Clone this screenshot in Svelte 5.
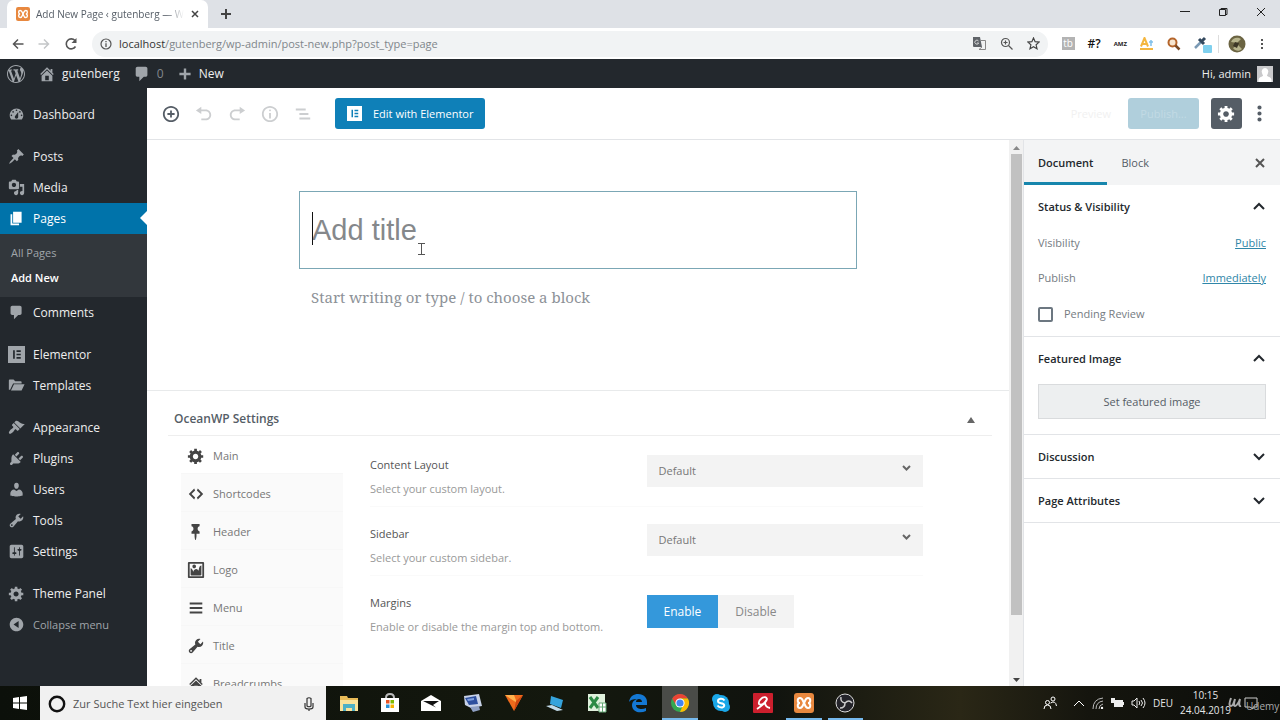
<script>
  // 20x20 glyphs, filled with the current text colour
  const icons = {
    wordpress: 'M20 10c0-5.51-4.49-10-10-10C4.48 0 0 4.49 0 10c0 5.52 4.48 10 10 10 5.51 0 10-4.48 10-10zM7.78 15.37L4.37 6.22c.55-.02 1.17-.08 1.17-.08.5-.06.44-1.13-.06-1.11 0 0-1.45.11-2.37.11-.18 0-.37 0-.58-.01C4.12 2.69 6.87 1.11 10 1.11c2.33 0 4.45.87 6.05 2.34-.68-.11-1.65.39-1.65 1.58 0 .74.45 1.36.9 2.1.35.61.55 1.36.55 2.46 0 1.49-1.4 5-1.4 5l-3.03-8.37c.54-.02.82-.17.82-.17.5-.05.44-1.25-.06-1.22 0 0-1.44.12-2.38.12-.87 0-2.33-.12-2.33-.12-.5-.03-.56 1.2-.06 1.22l.92.08 1.26 3.41zM17.41 10c.24-.64.74-1.87.43-4.25.7 1.29 1.05 2.71 1.05 4.25 0 3.29-1.73 6.24-4.4 7.78.97-2.59 1.94-5.2 2.92-7.78zM6.1 18.09C3.12 16.65 1.11 13.53 1.11 10c0-1.3.23-2.48.72-3.59C3.25 10.3 4.67 14.2 6.1 18.09zm4.03-6.63l2.58 6.98c-.86.29-1.76.45-2.71.45-.79 0-1.57-.11-2.29-.33.81-2.38 1.62-4.74 2.42-7.1z',
    home: 'M16 8.5l1.53 1.53-1.06 1.06L10 4.6l-6.47 6.49-1.06-1.06L10 2.5l4 4v-2h2v4zm-6-2.46l6 5.99V18H4v-5.97zM12 17v-5H8v5h4z',
    plus: 'M17 8.5v3h-5.5V17h-3v-5.5H3v-3h5.500V3h3v5.500z',
    dashboard: 'M3.76 16h12.480c1.1-1.37 1.76-3.110 1.76-5 0-4.42-3.58-8-8-8s-8 3.58-8 8c0 1.89.66 3.63 1.76 5zM10 4c.55 0 1 .45 1 1s-.45 1-1 1-1-.45-1-1 .45-1 1-1zM6 6c.55 0 1 .45 1 1s-.45 1-1 1-1-.45-1-1 .45-1 1-1zm8 0c.55 0 1 .45 1 1s-.45 1-1 1-1-.45-1-1 .45-1 1-1zm-5.370 5.550L12 7v6c0 1.100-.9 2-2 2s-2-.9-2-2c0-.57.24-1.080.63-1.450zM4 10c.55 0 1 .45 1 1s-.45 1-1 1-1-.45-1-1 .45-1 1-1zm12 0c.55 0 1 .45 1 1s-.45 1-1 1-1-.45-1-1 .45-1 1-1z',
    post: 'M10.440 3.020l1.820-1.820 6.360 6.350-1.830 1.820c-1.050-.68-2.480-.57-3.410.36l-.75.75c-.92.93-1.040 2.350-.35 3.410l-1.830 1.820-2.410-2.410-2.800 2.790c-.42.42-3.380 2.710-3.800 2.290s1.860-3.390 2.280-3.810l2.790-2.790L4.100 9.360l1.830-1.820c1.050.69 2.480.57 3.400-.36l.75-.75c.93-.92 1.050-2.350.36-3.410z',
    media: 'M13 11V4c0-.55-.45-1-1-1h-1.670L9 1H5L3.670 3H2c-.55 0-1 .45-1 1v7c0 .55.45 1 1 1h10c.55 0 1-.45 1-1zM7 4.500c1.380 0 2.500 1.120 2.500 2.500S8.380 9.500 7 9.500 4.500 8.380 4.500 7 5.620 4.500 7 4.500zM14 6h5v10.500c0 1.380-1.120 2.500-2.500 2.500S14 17.880 14 16.500s1.120-2.500 2.500-2.500c.17 0 .34.02.5.05V9h-3V6zm-4 8.050V13h2v3.500c0 1.380-1.120 2.500-2.500 2.500S7 17.880 7 16.500 8.120 14 9.500 14c.17 0 .34.02.5.05z',
    page: 'M6 15V2h10v13H6zm-1 1h8v2H3V5h2v11z',
    comments: 'M5 2h9c1.100 0 2 .9 2 2v7c0 1.100-.9 2-2 2h-2l-5 5v-5H5c-1.100 0-2-.9-2-2V4c0-1.100.9-2 2-2z',
    elementor: 'M0 0h20v20H0zM6 5v10h2V5zm4 0v2h5V5zm0 4v2h5V9zm0 4v2h5v-2z',
    templates: 'M1 15V4c0-.6.400-1 1-1h4.500l2 2H15c.6 0 1 .4 1 1v1.500H6L2.500 15zm2.500 1L7 8.500h12.500L16 16z',
    appearance: 'M14.480 11.060L7.410 3.990l1.500-1.500c.5-.56 2.300-.47 3.510.32 1.210.8 1.430 1.280 2.910 2.100 1.180.64 2.450 1.260 4.450.85zm-.71.71L6.700 4.700 4.930 6.470c-.39.39-.39 1.020 0 1.410l1.060 1.060c.39.39.39 1.030 0 1.420-.6.6-1.430 1.110-2.210 1.690-.35.26-.7.53-1.010.84C1.430 14.230.4 16.080 1.400 17.070c.99 1 2.840-.03 4.180-1.360.31-.31.58-.66.85-1.020.57-.78 1.080-1.610 1.690-2.210.39-.39 1.020-.39 1.410 0l1.060 1.060c.39.39 1.020.39 1.410 0z',
    plugins: 'M13.110 4.360L9.870 7.600 8 5.730l3.240-3.240c.35-.34 1.050-.2 1.560.32.52.51.66 1.210.31 1.550zm-8 1.770l.91-1.120 9.010 9.010-1.190.84c-.71.71-2.630 1.160-3.820 1.160H6.140L4.900 17.260c-.59.59-1.540.59-2.120 0-.59-.58-.59-1.530 0-2.120l1.240-1.240v-3.880c0-1.130.4-3.190 1.090-3.890zm7.260 3.970l3.240-3.240c.34-.35 1.040-.21 1.550.31.52.51.66 1.210.31 1.550l-3.240 3.250z',
    users: 'M10 9.250c-2.270 0-2.730-3.440-2.730-3.440C7 4.020 7.820 2 9.970 2c2.160 0 2.980 2.020 2.710 3.810 0 0-.41 3.440-2.680 3.440zm0 2.570L12.720 10c2.390 0 4.520 2.330 4.520 4.530v2.490s-3.650 1.130-7.240 1.130c-3.650 0-7.240-1.130-7.240-1.130v-2.490c0-2.250 1.940-4.480 4.470-4.480z',
    tools: 'M16.680 9.770c-1.340 1.340-3.300 1.670-4.950.99l-5.410 6.520c-.99.99-2.590.99-3.580 0s-.99-2.590 0-3.570l6.520-5.420c-.68-1.650-.35-3.610.99-4.950 1.280-1.280 3.120-1.620 4.720-1.060l-2.890 2.890 2.820 2.820 2.860-2.870c.53 1.580.18 3.390-1.080 4.650zM3.810 16.210c.4.39 1.040.39 1.430 0 .4-.4.4-1.040 0-1.430-.39-.4-1.030-.4-1.430 0-.39.39-.39 1.030 0 1.430z',
    settings: 'M18 16V4c0-1.100-.9-2-2-2H4c-1.100 0-2 .9-2 2v12c0 1.100.9 2 2 2h12c1.100 0 2-.9 2-2zM8 11h1c.55 0 1 .45 1 1s-.45 1-1 1H8v1.500c0 .28-.22.5-.5.5s-.5-.22-.5-.5V13H6c-.55 0-1-.45-1-1s.45-1 1-1h1V5.500c0-.28.22-.5.5-.5s.5.22.5.5V11zm5-2h-1c-.55 0-1-.45-1-1s.45-1 1-1h1V5.500c0-.28.22-.5.5-.5s.5.22.5.5V7h1c.55 0 1 .45 1 1s-.45 1-1 1h-1v5.500c0 .28-.22.5-.5.5s-.5-.22-.5-.5V9z',
    gear: 'M18 12h-2.180c-.17.7-.44 1.350-.81 1.930l1.540 1.540-2.100 2.100-1.540-1.540c-.58.36-1.230.63-1.910.79V19H8v-2.180c-.68-.16-1.330-.43-1.910-.79l-1.540 1.540-2.120-2.120 1.540-1.540c-.36-.58-.63-1.230-.79-1.910H1V9.030h2.170c.16-.7.44-1.350.8-1.940L2.430 5.550l2.100-2.100 1.540 1.540c.58-.37 1.240-.64 1.930-.81V2h3v2.180c.68.16 1.330.43 1.910.79l1.540-1.540 2.120 2.120-1.540 1.540c.36.59.64 1.240.8 1.940H18V12zm-8.500 1.500c1.660 0 3-1.340 3-3s-1.340-3-3-3-3 1.340-3 3 1.340 3 3 3z',
    collapse: 'M10 2c4.420 0 8 3.580 8 8s-3.580 8-8 8-8-3.580-8-8 3.580-8 8-8zm2.500 12V6l-6 4z',
    insert: 'M10 1c-5 0-9 4-9 9s4 9 9 9 9-4 9-9-4-9-9-9zm0 16c-3.900 0-7-3.100-7-7s3.100-7 7-7 7 3.100 7 7-3.100 7-7 7zm1-11H9v3H6v2h3v3h2v-3h3V9h-3V6z',
    undo: 'M12 5H7V2L1 6l6 4V7h5c2.200 0 4 1.800 4 4s-1.800 4-4 4H7v2h5c3.300 0 6-2.700 6-6s-2.700-6-6-6z',
    redo: 'M8 5h5V2l6 4-6 4V7H8c-2.200 0-4 1.800-4 4s1.800 4 4 4h5v2H8c-3.300 0-6-2.700-6-6s2.700-6 6-6z',
    info: 'M9 15h2V9H9v6zm1-10c-.5 0-1 .5-1 1s.5 1 1 1 1-.5 1-1-.5-1-1-1zm0-4c-5 0-9 4-9 9s4 9 9 9 9-4 9-9-4-9-9-9zm0 16c-3.900 0-7-3.100-7-7s3.100-7 7-7 7 3.100 7 7-3.100 7-7 7z',
    outline: 'M2 4h11v2H2zm4 5h10v2H6zm0 5h12v2H6z',
    code: 'M9 6l-4 4 4 4-1 2-6-6 6-6zm2 8l4-4-4-4 1-2 6 6-6 6z',
    pin: 'M5 3.610V1.040l8.990-.01-.01 2.580c-1.220.26-2.160 1.350-2.160 2.670v.5c.01 1.310.93 2.400 2.170 2.660l-.01 2.580h-3.410l-.01 2.570c0 .6-.47 4.410-1.060 4.410-.6 0-1.080-3.810-1.080-4.410v-2.560L5 12.020l.01-2.580c1.230-.25 2.150-1.350 2.150-2.660v-.5c0-1.310-.92-2.410-2.160-2.670z',
    image: 'M2.250 1h15.500c.69 0 1.250.56 1.250 1.250v15.500c0 .69-.56 1.250-1.250 1.250H2.250C1.560 19 1 18.440 1 17.750V2.250C1 1.560 1.560 1 2.250 1zM17 17V3H3v14h14zM10 6c0-1.100-.9-2-2-2s-2 .9-2 2 .9 2 2 2 2-.9 2-2zm3 5s0-6 3-6v10c0 .55-.45 1-1 1H5c-.55 0-1-.45-1-1V8c2 0 3 4 3 4s1-3 3-3 3 2 3 2z',
    menu: 'M17 6V4H3v2h14zm0 5V9H3v2h14zm0 5v-2H3v2h14z',
    dots: 'M10 1.500a2.200 2.200 0 100 4.400 2.200 2.200 0 000-4.400zm0 6.300a2.200 2.200 0 100 4.400 2.200 2.200 0 000-4.400zm0 6.300a2.200 2.200 0 100 4.400 2.200 2.200 0 000-4.400z',
  };

  const menuGroups = [
    [{ icon: 'dashboard', label: 'Dashboard' }],
    [
      { icon: 'post', label: 'Posts' },
      { icon: 'media', label: 'Media' },
      { icon: 'page', label: 'Pages', current: true, children: ['All Pages', 'Add New'] },
      { icon: 'comments', label: 'Comments' },
    ],
    [
      { icon: 'elementor', label: 'Elementor' },
      { icon: 'templates', label: 'Templates' },
    ],
    [
      { icon: 'appearance', label: 'Appearance' },
      { icon: 'plugins', label: 'Plugins' },
      { icon: 'users', label: 'Users' },
      { icon: 'tools', label: 'Tools' },
      { icon: 'settings', label: 'Settings' },
    ],
    [
      { icon: 'gear', label: 'Theme Panel' },
      { icon: 'collapse', label: 'Collapse menu', muted: true },
    ],
  ];

  const settingTabs = [
    { icon: 'gear', label: 'Main' },
    { icon: 'code', label: 'Shortcodes' },
    { icon: 'pin', label: 'Header' },
    { icon: 'image', label: 'Logo' },
    { icon: 'menu', label: 'Menu' },
    { icon: 'tools', label: 'Title' },
    { icon: 'home', label: 'Breadcrumbs' },
  ];

  const selects = [
    { id: 'layout', label: 'Content Layout', hint: 'Select your custom layout.' },
    { id: 'sidebar', label: 'Sidebar', hint: 'Select your custom sidebar.' },
  ];

  const apps = ['explorer', 'store', 'mail', 'pc', 'fox', 'remote', 'excel', 'edge', 'chrome', 'skype', 'avira', 'xampp', 'obs'];
  const running = ['chrome', 'xampp', 'obs'];

  let activeTab = $state('Main');
  let margins = $state('Enable');
  let title = $state('');
  let pending = $state(false);
</script>

{#snippet icon(name, size = 18)}
  <svg class="icon" width={size} height={size} viewBox="0 0 20 20" aria-hidden="true">
    <path fill="currentColor" fill-rule="evenodd" d={icons[name]} />
  </svg>
{/snippet}

{#snippet chevron(up)}
  <svg width="14" height="14" viewBox="0 0 14 14" aria-hidden="true">
    <path d={up ? 'M2 9l5-5 5 5' : 'M2 4l5 5 5-5'} fill="none" stroke="#23282d" stroke-width="2" />
  </svg>
{/snippet}

{#snippet xampp(size)}
  <svg width={size} height={size} viewBox="0 0 20 20" aria-hidden="true">
    <rect width="20" height="20" rx="3" fill="#e8883f" />
    <path d="M6 5c-3 0-3 5 0 5-3 0-3 5 0 5s3-4 4-5c1 1 1 5 4 5s3-5 0-5c3 0 3-5 0-5s-3 4-4 5c-1-1-1-5-4-5z" fill="none" stroke="#fff" stroke-width="2" />
  </svg>
{/snippet}

<div class="screen">
  <header class="browser">
    <div class="tabstrip">
      <div class="tab">
        {@render xampp(14)}
        <span class="tab-title">Add New Page ‹ gutenberg — W</span>
        <button aria-label="Close tab">
          <svg width="10" height="10" viewBox="0 0 10 10"><path d="M2 2l6 6M8 2l-6 6" stroke="#444" stroke-width="1.500" /></svg>
        </button>
      </div>
      <button class="new-tab" aria-label="New tab">
        <svg width="12" height="12" viewBox="0 0 12 12"><path d="M6 1v10M1 6h10" stroke="#444" stroke-width="2" /></svg>
      </button>
      <div class="window-buttons">
        <button aria-label="Minimize"><svg width="10" height="10" viewBox="0 0 10 10"><path d="M0 4.500h10" stroke="#222" /></svg></button>
        <button aria-label="Restore"><svg width="10" height="10" viewBox="0 0 10 10"><path d="M1.500 2.500h6v6h-6zM3 2.500v-1h6v6H8" fill="none" stroke="#222" /></svg></button>
        <button aria-label="Close window"><svg width="10" height="10" viewBox="0 0 10 10"><path d="M1 1l8 8M9 1L1 9" stroke="#222" /></svg></button>
      </div>
    </div>
    <div class="toolbar">
      <button aria-label="Back"><svg width="12" height="12" viewBox="0 0 12 12"><path d="M11.500 6H2M6 1.500L1.500 6 6 10.500" fill="none" stroke="#555" stroke-width="1.500" /></svg></button>
      <button aria-label="Forward"><svg width="12" height="12" viewBox="0 0 12 12"><path d="M.5 6H10M6 1.500L10.500 6 6 10.500" fill="none" stroke="#c4c6c8" stroke-width="1.500" /></svg></button>
      <button aria-label="Reload"><svg width="14" height="14" viewBox="0 0 14 14"><path d="M11.500 9.500A5 5 0 1111 3.500" fill="none" stroke="#555" stroke-width="1.600" /><path d="M12.500 1v5h-5z" fill="#555" /></svg></button>
      <div class="address">
        <svg width="12" height="12" viewBox="0 0 12 12"><circle cx="6" cy="6" r="5" fill="none" stroke="#555" stroke-width="1.200" /><path d="M6 5.200V9M6 3v1.200" stroke="#555" stroke-width="1.300" /></svg>
        <span class="url"><b>localhost</b>/gutenberg/wp-admin/post-new.php?post_type=page</span>
        <div class="address-icons">
          <svg width="13" height="13" viewBox="0 0 13 13"><path d="M0 0h7l2 10H1a1 1 0 01-1-1z" fill="#5f6368" /><path d="M8 3.500h4.500v9H6l3-2.500" fill="none" stroke="#888" /><path d="M5.500 4a2 2 0 10.200 2H4M9 6h3M10.500 5v1q0 2-1.500 3" fill="none" stroke="#eee" stroke-width=".8" /></svg>
          <svg width="13" height="13" viewBox="0 0 13 13"><circle cx="5.500" cy="5.500" r="4" fill="none" stroke="#555" stroke-width="1.200" /><path d="M8.500 8.500l4 4M3.500 5.500h4M5.500 3.500v4" stroke="#555" stroke-width="1.200" /></svg>
          <svg width="13" height="13" viewBox="0 0 13 13"><path d="M6.500 1l1.600 3.700 4 .4-3 2.700.9 3.900-3.500-2-3.500 2 .9-3.900-3-2.700 4-.4z" fill="none" stroke="#444" stroke-width="1.200" /></svg>
        </div>
      </div>
      <div class="extensions">
        <span class="tb">tb</span>
        <span class="hash">#?</span>
        <span class="amz">AMZ</span>
        <svg width="14" height="14" viewBox="0 0 14 14"><path d="M1 9.500L4.500 1 8 9.500M2.500 7h4M0 12h13" fill="none" stroke="#f4b63f" stroke-width="2" /><path d="M11 9V3M9 5h4" stroke="#7fc0ea" stroke-width="1.500" /></svg>
        <svg width="14" height="14" viewBox="0 0 14 14"><circle cx="5.500" cy="5.500" r="4" fill="#f7e6d0" stroke="#b5652b" stroke-width="2" /><path d="M8.500 8.500l4 4" stroke="#7a4a25" stroke-width="2.500" /></svg>
        <svg width="18" height="18" viewBox="0 0 18 18"><path d="M1 13l6-6" stroke="#7b9ab5" stroke-width="2.500" /><path d="M5 4l5 5M7 7l4-4" stroke="#34495e" stroke-width="3" /><rect x="9" y="10" width="9" height="8" rx="1" fill="#7fd0ee" /></svg>
      </div>
      <svg class="profile" width="18" height="18" viewBox="0 0 18 18"><circle cx="9" cy="9" r="8.500" fill="#6b6442" /><path d="M3 7c2-5 7-5 10-3l-4 4zM5 13l5-3 4 4c-3 3-7 2-9-1z" fill="#b7b48c" /><path d="M7 7l4 1-2 5-4-2z" fill="#3c3626" /></svg>
      <button aria-label="Browser menu"><svg width="4" height="14" viewBox="0 0 4 14"><path d="M1 2h2v2H1zm0 4h2v2H1zm0 4h2v2H1z" fill="#555" /></svg></button>
    </div>
  </header>

  <nav class="adminbar" aria-label="Toolbar">
    <a href="#wp" aria-label="About WordPress">{@render icon('wordpress')}</a>
    <a href="#site">{@render icon('home')}gutenberg</a>
    <a href="#comments" class="count">{@render icon('comments')}<span>0</span></a>
    <a href="#new" class="new">{@render icon('plus', 16)}New</a>
    <a href="#profile" class="account">
      Hi, admin
      <svg width="16" height="16" viewBox="0 0 16 16"><path fill="#c9c9cb" d="M0 0h16v16H0z" /><path fill="#fff" d="M8 2a3.500 3.500 0 013 5c-.4 1.500-1 2-1 3 2 1 4 1 4.500 4v2h-13v-2c.5-3 2.500-3 4.500-4 0-1-.6-1.500-1-3a3.500 3.500 0 013-5z" /></svg>
    </a>
  </nav>

  <div class="workspace">
    <nav class="adminmenu" aria-label="Main menu">
      {#each menuGroups as group}
        <ul>
          {#each group as item}
            <li>
              <a href="#{item.icon}" class="item" class:current={item.current} class:muted={item.muted}>
                {@render icon(item.icon, 17)}{item.label}
              </a>
              {#if item.children}
                <div class="submenu">
                  {#each item.children as child}
                    <a href="#sub" class:active={child === 'Add New'}>{child}</a>
                  {/each}
                </div>
              {/if}
            </li>
          {/each}
        </ul>
      {/each}
    </nav>

    <div class="editor">
      <div class="editor-header">
        <button class="tool" aria-label="Add block">{@render icon('insert')}</button>
        <button class="tool off" aria-label="Undo">{@render icon('undo')}</button>
        <button class="tool off" aria-label="Redo">{@render icon('redo')}</button>
        <button class="tool off" aria-label="Content structure">{@render icon('info')}</button>
        <button class="tool off" aria-label="Block navigation">{@render icon('outline')}</button>
        <button class="elementor">{@render icon('elementor', 15)}Edit with Elementor</button>
        <div class="editor-actions">
          <button class="preview" disabled>Preview</button>
          <button class="publish" disabled>Publish...</button>
          <button class="gear" aria-label="Settings">{@render icon('gear', 19)}</button>
          <button class="more" aria-label="More tools">{@render icon('dots', 19)}</button>
        </div>
      </div>

      <div class="editor-body">
        <main class="canvas">
          <div class="writing">
            <div class="title-block">
              <span class="caret"></span>
              <input aria-label="Title" placeholder="Add title" bind:value={title} />
              <svg class="pointer" width="7" height="12" viewBox="0 0 7 12"><path d="M0 .5h7M0 11.500h7M3.500 0v12" stroke="#555" /></svg>
            </div>
            <input class="first-block" aria-label="First block" placeholder="Start writing or type / to choose a block" />
          </div>

          <section class="metabox">
            <div class="metabox-head">
              <h2>OceanWP Settings</h2>
              <button aria-label="Toggle panel"><svg width="8" height="6" viewBox="0 0 8 6"><path d="M4 0l4 6H0z" fill="#666" /></svg></button>
            </div>
            <div class="metabox-body">
              <div class="setting-tabs">
                {#each settingTabs as tab}
                  <button class:selected={activeTab === tab.label} onclick={() => (activeTab = tab.label)}>
                    {@render icon(tab.icon)}{tab.label}
                  </button>
                {/each}
              </div>
              <div class="fields">
                {#each selects as field}
                  <div class="field">
                    <div class="about">
                      <label for={field.id}>{field.label}</label>
                      <p>{field.hint}</p>
                    </div>
                    <div class="select">
                      <select id={field.id}><option>Default</option></select>
                      <svg width="9" height="6" viewBox="0 0 9 6"><path d="M1 1l3.500 3.500L8 1" fill="none" stroke="#666" stroke-width="2" /></svg>
                    </div>
                  </div>
                {/each}
                <div class="field">
                  <div class="about">
                    <span id="margins">Margins</span>
                    <p>Enable or disable the margin top and bottom.</p>
                  </div>
                  <div class="switch" role="group" aria-labelledby="margins">
                    {#each ['Enable', 'Disable'] as option}
                      <button class:on={margins === option} onclick={() => (margins = option)}>{option}</button>
                    {/each}
                  </div>
                </div>
              </div>
            </div>
          </section>
        </main>

        <div class="scrollbar" aria-hidden="true">
          <svg width="7" height="4" viewBox="0 0 7 4"><path d="M3.500 0L7 4H0z" fill="#888" /></svg>
          <div class="thumb"></div>
          <svg width="7" height="4" viewBox="0 0 7 4"><path d="M3.500 4L7 0H0z" fill="#444" /></svg>
        </div>

        <aside class="inspector">
          <div class="inspector-tabs">
            <button class="chosen">Document</button>
            <button>Block</button>
            <button class="close" aria-label="Close settings">
              <svg width="10" height="10" viewBox="0 0 10 10"><path d="M1 1l8 8M9 1L1 9" stroke="#555" stroke-width="2" /></svg>
            </button>
          </div>
          <section class="panel status">
            <button class="panel-head">Status &amp; Visibility{@render chevron(true)}</button>
            <div class="row"><span>Visibility</span><a href="#public">Public</a></div>
            <div class="row"><span>Publish</span><a href="#immediately">Immediately</a></div>
            <label class="check"><input type="checkbox" bind:checked={pending} />Pending Review</label>
          </section>
          <section class="panel featured">
            <button class="panel-head">Featured Image{@render chevron(true)}</button>
            <button class="set-image">Set featured image</button>
          </section>
          <section class="panel"><button class="panel-head">Discussion{@render chevron(false)}</button></section>
          <section class="panel"><button class="panel-head">Page Attributes{@render chevron(false)}</button></section>
        </aside>
      </div>
    </div>
  </div>

  <footer class="taskbar">
    <button class="start" aria-label="Start">
      <svg width="14" height="14" viewBox="0 0 14 14"><path d="M0 2l6-1v5.500H0zM7 .9L14 0v6.500H7zM0 7.500h6V13l-6-1zM7 7.500h7V14l-7-1z" fill="#fff" /></svg>
    </button>
    <div class="search">
      <svg width="18" height="18" viewBox="0 0 18 18"><circle cx="9" cy="9" r="7.200" fill="none" stroke="#111" stroke-width="2.400" /></svg>
      <input aria-label="Suche" placeholder="Zur Suche Text hier eingeben" />
      <svg width="10" height="14" viewBox="0 0 10 14"><path d="M3 1.500q2-1.500 4 0V9q-2 1.500-4 0zM1 6v4q0 2 4 2t4-2V6M5 12v2" fill="none" stroke="#333" stroke-width="1.200" /></svg>
    </div>
    <div class="apps">
      {#each apps as app}
        <button class:running={running.includes(app)} class:front={app === 'chrome'} aria-label={app}>
          {#if app === 'xampp'}
            {@render xampp(20)}
          {:else}
            <svg width="20" height="20" viewBox="0 0 20 20">
              {#if app === 'explorer'}
                <path d="M1 3h7l1 2h10v13H1z" fill="#e8bb58" /><path d="M1 7h18v11H1z" fill="#fbe29b" /><path d="M4 18v-7h12v7h-3v-3H7v3z" fill="#4fb0c6" />
              {:else if app === 'store'}
                <path d="M6 5q0-4 4-4t4 4" fill="none" stroke="#bbb" stroke-width="2" /><path d="M1 5h18v14H1z" fill="#fff" /><path d="M6 7h3.500v3.500H6z" fill="#e85325" /><path d="M10.500 7H14v3.500h-3.500z" fill="#7fba00" /><path d="M6 11.500h3.500V15H6z" fill="#2a92d8" /><path d="M10.500 11.500H14V15h-3.500z" fill="#f6b300" />
              {:else if app === 'mail'}
                <path d="M0 8l10-6 10 6v10H0z" fill="#fff" /><path d="M2 8h16l-6 4 3 2.500z" fill="#111" />
              {:else if app === 'pc'}
                <path d="M1 3l15-2 3 12-11 2-6-3z" fill="#c8d2e8" /><path d="M2 5l11-2 2 8-9 1z" fill="#2d4f9e" /><path d="M4 6l7-1v2l-6 1z" fill="#7fa0e0" /><path d="M7 14l9-1 1 4-7 2z" fill="#8e9fc3" />
              {:else if app === 'fox'}
                <path d="M1 2h18l-9 16z" fill="#ee6a1c" /><path d="M1 2h9l3 8z" fill="#ffb14d" /><path d="M19 2l-9 16 2-10z" fill="#cf4510" />
              {:else if app === 'remote'}
                <path d="M5 3l12 4-2 8-11-4z" fill="#35a3dc" /><path d="M0 13l6-1 11 5-6 1z" fill="#c3dbe9" />
              {:else if app === 'excel'}
                <path d="M1 1h17v17H1z" fill="#dff0dc" /><path d="M3 4l8 11M11 4L3 15" stroke="#2c8a45" stroke-width="3" /><path d="M12 10h7v9h-7zM12 14h7M15.500 10v9" fill="#fff" stroke="#65a875" />
              {:else if app === 'edge'}
                <path d="M1 9C2 3 6 1 10 1c6 0 9 4 9 8v3H8c0 4 6 5 10 3v3c-6 3-14 1-14-6 0-3 2-5 5-6-4 0-7 1-8 3zm7 0h6c0-4-6-4-6 0z" fill="#1478d4" />
              {:else if app === 'chrome'}
                <circle cx="10" cy="10" r="9" fill="#34a853" /><path d="M2.200 5.500A9 9 0 0117.800 5.500H10L6 12z" fill="#ea4335" /><path d="M17.800 5.500A9 9 0 0110 19l4-9-4-4.500z" fill="#fbbc05" /><circle cx="10" cy="10" r="4.600" fill="#fff" /><circle cx="10" cy="10" r="3.600" fill="#4285f4" />
              {:else if app === 'skype'}
                <circle cx="10" cy="10" r="8" fill="#1aa7e8" /><circle cx="6" cy="6" r="5" fill="#1aa7e8" /><circle cx="14" cy="14" r="5" fill="#1aa7e8" /><path d="M13.500 7.500Q12 5.500 9.500 5.800 7 6.200 7 8t3 2.200 3.200 2-1.700 2.200Q8 14.800 6.500 12.500" fill="none" stroke="#fff" stroke-width="2" />
              {:else if app === 'avira'}
                <rect width="20" height="20" rx="1" fill="#cc1f2d" /><path d="M4 16Q13 10 14 6q-1-3-5-1-4 3-3 6 3 2 6-2 0 5 5 6" fill="none" stroke="#fff" stroke-width="1.800" />
              {:else if app === 'obs'}
                <circle cx="10" cy="10" r="9" fill="#24242a" stroke="#ddd" /><path d="M10 10q-5-1-4-6M10 10q4-4 7 0M10 10q0 5-5 5" fill="none" stroke="#ccc" stroke-width="1.500" />
              {/if}
            </svg>
          {/if}
        </button>
      {/each}
    </div>
    <div class="tray">
      <svg class="people" width="14" height="14" viewBox="0 0 14 14"><g fill="none" stroke="#fff"><circle cx="4.500" cy="6.500" r="2" /><path d="M1 13q0-4 3.500-4T8 13" /><circle cx="10" cy="3" r="2" /><path d="M7.500 7q5-3 6 3" /></g></svg>
      <svg width="12" height="8" viewBox="0 0 12 8"><path d="M1 7l5-5 5 5" fill="none" stroke="#fff" /></svg>
      <svg width="12" height="12" viewBox="0 0 12 12"><path d="M1 12Q1 2 11 1M4 12q0-7 7-8M7 12q0-4 4-5" fill="none" stroke="#bbb" /><circle cx="10" cy="11" r="1.200" fill="#fff" /></svg>
      <svg width="13" height="10" viewBox="0 0 13 10"><path d="M3 2h9v7H3zM0 0h4v5H0z" fill="#eee" /><path d="M12 4h1v3h-1z" fill="#eee" /></svg>
      <svg width="15" height="12" viewBox="0 0 15 12"><path d="M1 4h2l3-3v10L3 8H1zM8 4q1.500 2 0 4M10 3q3 3 0 6M12 1q4 5 0 10" fill="none" stroke="#eee" /></svg>
      <span>DEU</span>
      <time>10:15<br />24.04.2019</time>
      <div class="notify">
        <svg width="14" height="13" viewBox="0 0 14 13"><path d="M1 1h12v9H9v2l-3-2H1z" fill="none" stroke="#ccc" /></svg>
        <svg class="mark" width="14" height="13" viewBox="0 0 14 13"><path d="M3 1q-3 8 0 8 2 0 4-7-2 7 0 7 3-1 5-7-2 8 1 7" fill="none" stroke="#aaa" stroke-width="2" /></svg>
        <span>Udemy</span>
      </div>
    </div>
  </footer>
</div>

<style>
  :global(body) {
    margin: 0;
    overflow: hidden;
  }

  .screen {
    display: flex;
    flex-direction: column;
    height: 100vh;
    font: 11px/16px "Open Sans", "Noto Sans", sans-serif;
    color: #555d66;
    background: #fff;
  }

  button, input, select {
    font: inherit;
    color: inherit;
    margin: 0;
    padding: 0;
    border: 0;
    background: none;
  }

  button {
    display: flex;
    align-items: center;
    justify-content: center;
  }

  a {
    color: inherit;
    text-decoration: none;
  }

  svg {
    display: block;
    flex: none;
  }

  ul, p, h2 {
    margin: 0;
    padding: 0;
    list-style: none;
  }

  /* browser window */
  .tabstrip {
    display: flex;
    align-items: stretch;
    height: 28px;
    background: #dee1e6;
  }

  .tab {
    display: flex;
    align-items: center;
    gap: 6px;
    width: 184px;
    margin-left: 7px;
    padding: 0 8px 0 9px;
    background: #fff;
    border-radius: 7px 7px 0 0;
    font-size: 10px;
  }

  .tab-title {
    flex: 1;
    overflow: hidden;
    white-space: nowrap;
    mask-image: linear-gradient(90deg, #000 88%, transparent);
  }

  .new-tab {
    width: 36px;
  }

  .window-buttons {
    display: flex;
    margin-left: auto;
  }

  .window-buttons button {
    width: 38px;
    padding-bottom: 4px;
  }

  .toolbar {
    display: flex;
    align-items: center;
    gap: 14px;
    height: 31px;
    padding: 0 16px 0 12px;
  }

  .address {
    display: flex;
    flex: 1;
    align-items: center;
    gap: 7px;
    height: 26px;
    padding: 0 8px;
    border-radius: 13px;
    background: #f1f3f4;
  }

  .url {
    color: #80868b;
  }

  .url b {
    font-weight: 400;
    color: #333;
  }

  .address-icons {
    display: flex;
    gap: 14px;
    margin-left: auto;
  }

  .extensions {
    display: flex;
    align-items: center;
    gap: 13px;
    padding-right: 6px;
    margin-right: -5px;
    border-right: 1px solid #ddd;
  }

  .tb {
    width: 13px;
    background: #b3b3b3;
    color: #fff;
    font-size: 10px;
    line-height: 13px;
    text-align: center;
  }

  .hash {
    color: #111;
    font-size: 12px;
    font-weight: 600;
  }

  .amz {
    color: #222;
    font-size: 6px;
    font-weight: 700;
  }

  /* admin bar */
  .adminbar {
    display: flex;
    align-items: center;
    gap: 13px;
    height: 28px;
    padding: 1px 7px 0;
    background: #23282d;
    color: #eee;
    font-size: 12px;
  }

  .adminbar a {
    display: flex;
    align-items: center;
    gap: 6px;
  }

  .adminbar .icon {
    color: #a0a5aa;
  }

  .adminbar .count {
    color: #82878c;
  }

  .adminbar .account {
    margin-left: auto;
    font-size: 11px;
  }

  .workspace {
    display: flex;
    flex: 1;
    min-height: 0;
  }

  .adminmenu {
    display: flex;
    flex-direction: column;
    flex: none;
    gap: 11px;
    box-sizing: border-box;
    width: 147px;
    padding-top: 11px;
    overflow: hidden;
    background: #23282d;
    color: #eee;
    font-size: 12px;
  }

  .item {
    position: relative;
    display: flex;
    align-items: center;
    gap: 8px;
    height: 31px;
    padding-left: 8px;
  }

  .item .icon {
    color: #a0a5aa;
  }

  .item.current {
    background: #0073aa;
    color: #fff;
  }

  .item.current .icon {
    color: #fff;
  }

  .item.current::after {
    content: '';
    position: absolute;
    top: 8px;
    right: 0;
    border: 7px solid transparent;
    border-left: 0;
    border-right-color: #fff;
  }

  .item.muted {
    color: #a0a5aa;
    font-size: 11px;
  }

  .submenu {
    display: flex;
    flex-direction: column;
    gap: 9px;
    padding: 11px;
    background: #32373c;
    color: #a0a5aa;
    font-size: 11px;
  }

  .submenu .active {
    color: #fff;
    font-weight: 600;
  }

  /* editor */
  .editor {
    display: flex;
    flex: 1;
    flex-direction: column;
    min-width: 0;
  }

  .editor-header {
    display: flex;
    align-items: center;
    gap: 15px;
    height: 51px;
    padding: 0 15px;
    border-bottom: 1px solid #e2e4e7;
  }

  .off {
    color: #ccced0;
  }

  .elementor {
    gap: 11px;
    height: 31px;
    margin-left: 8px;
    padding: 0 12px;
    border-radius: 3px;
    background: #0f80b8;
    color: #fff;
  }

  .editor-actions {
    display: flex;
    align-items: center;
    gap: 12px;
    margin-left: auto;
  }

  .preview {
    color: #f1f1f1;
    padding: 0 5px;
  }

  .publish {
    width: 71px;
    height: 31px;
    border-radius: 3px;
    background: #b0cfdc;
    color: #c2dae4;
  }

  .gear {
    width: 31px;
    height: 31px;
    border-radius: 3px;
    background: #555d66;
    color: #fff;
  }

  .more {
    width: 11px;
  }

  .editor-body {
    display: flex;
    flex: 1;
    min-height: 0;
  }

  .canvas {
    flex: 1;
    min-width: 0;
    overflow: hidden;
  }

  .writing {
    max-width: 558px;
    height: 250px;
    margin: 0 auto;
    padding-top: 51px;
    box-sizing: border-box;
  }

  .title-block {
    position: relative;
    display: flex;
    box-sizing: border-box;
    height: 78px;
    padding: 0 12px;
    border: 1px solid #7ba7b5;
  }

  .title-block input {
    flex: 1;
    min-width: 0;
    font: 29px/40px "Liberation Sans", Arial, sans-serif;
  }

  .title-block input::placeholder {
    color: #85888b;
  }

  .caret {
    position: absolute;
    top: 20px;
    left: 12px;
    width: 1px;
    height: 33px;
    background: #111;
  }

  .pointer {
    position: absolute;
    top: 51px;
    left: 118px;
  }

  .first-block {
    width: 100%;
    box-sizing: border-box;
    margin-top: 16px;
    padding: 0 12px;
    font: 15px/24px "Noto Serif", "DejaVu Serif Condensed", "DejaVu Serif", serif;
  }

  .first-block::placeholder {
    color: #8d9298;
  }

  .metabox {
    padding: 0 17px 0 21px;
    border-top: 1px solid #e8eaeb;
  }

  .metabox-head {
    display: flex;
    align-items: center;
    justify-content: space-between;
    height: 45px;
    padding: 6px 17px 0 6px;
    box-sizing: border-box;
    border-bottom: 1px solid #eee;
  }

  .metabox-head h2 {
    padding-top: 6px;
    font-size: 12px;
    font-weight: 600;
  }

  .metabox-head button {
    padding-top: 8px;
  }

  .metabox-body {
    display: flex;
    gap: 27px;
    padding: 0 69px 0 13px;
  }

  .setting-tabs {
    flex: none;
    width: 162px;
    background: #fafafa;
  }

  .setting-tabs button {
    gap: 8px;
    box-sizing: border-box;
    width: 100%;
    height: 38px;
    padding: 2px 0 0 6px;
    justify-content: flex-start;
    border-bottom: 1px solid #f7f7f7;
    color: #777;
  }

  .setting-tabs .icon {
    color: #444;
  }

  .setting-tabs .selected {
    background: #fff;
  }

  .fields {
    flex: 1;
    padding-top: 2px;
  }

  .field {
    display: flex;
    height: 69px;
    padding-top: 17px;
    box-sizing: border-box;
    border-bottom: 1px solid #fafafa;
  }

  .field:last-child {
    border: 0;
  }

  .about {
    flex: 1;
    padding-top: 2px;
    color: #555;
  }

  .about p {
    padding-top: 8px;
    color: #999;
  }

  .select {
    position: relative;
    width: 50%;
  }

  .select select {
    width: 100%;
    height: 32px;
    padding-left: 12px;
    appearance: none;
    background: #f3f3f3;
    color: #777;
  }

  .select svg {
    position: absolute;
    top: 10px;
    right: 12px;
  }

  .switch {
    display: flex;
    align-items: flex-start;
    width: 50%;
    padding-top: 2px;
    font-size: 12px;
  }

  .switch button {
    height: 33px;
    padding: 0 17px;
    background: #f3f3f3;
    color: #888;
  }

  .switch .on {
    background: #3498db;
    color: #fff;
  }

  .scrollbar {
    display: flex;
    flex-direction: column;
    align-items: center;
    gap: 4px;
    width: 14px;
    padding: 6px 0 4px;
    background: #f1f1f1;
  }

  .scrollbar .thumb {
    width: 11px;
    height: 86%;
    margin-bottom: auto;
    background: #c1c1c1;
  }

  /* document settings */
  .inspector {
    width: 256px;
    border-left: 1px solid #e2e4e7;
  }

  .inspector-tabs {
    display: flex;
    height: 45px;
    padding-right: 15px;
    background: #f3f4f5;
  }

  .inspector-tabs button {
    padding: 0 14px;
  }

  .inspector-tabs .chosen {
    border-bottom: 3px solid #1786ad;
    padding-top: 3px;
    color: #23282d;
    font-weight: 600;
  }

  .inspector-tabs .close {
    margin-left: auto;
    padding: 0;
  }

  .panel {
    border-bottom: 1px solid #e2e4e7;
  }

  .panel-head {
    justify-content: space-between;
    width: 100%;
    height: 43px;
    padding: 0 14px;
    color: #23282d;
    font-weight: 600;
  }

  .row {
    display: flex;
    justify-content: space-between;
    padding: 7px 14px 12px;
  }

  .row span, .check {
    color: #757b82;
  }

  .row a {
    color: #2f86a8;
    text-decoration: underline;
  }

  .check {
    display: flex;
    align-items: center;
    gap: 11px;
    padding: 8px 14px 14px;
  }

  .check input {
    width: 15px;
    height: 15px;
    appearance: none;
    border: 2px solid #6c7781;
    border-radius: 2px;
  }

  .set-image {
    width: calc(100% - 28px);
    height: 35px;
    margin: 4px 14px 15px;
    border: 1px solid #d9dbdd;
    background: #edeff0;
  }

  /* Windows taskbar */
  .taskbar {
    display: flex;
    align-items: stretch;
    height: 34px;
    background: linear-gradient(90deg, #0c100a, #14180e 45%, #10130e 60%, #2a2716 75%, #15150e 85%, #0b0d0a);
    color: #e6e6e6;
  }

  .start {
    width: 40px;
  }

  .search {
    display: flex;
    align-items: center;
    gap: 7px;
    width: 286px;
    padding: 1px 12px 0 8px;
    box-sizing: border-box;
    background: #f1f1f1;
    color: #555;
  }

  .search input {
    flex: 1;
    min-width: 0;
  }

  .search input::placeholder {
    color: #555;
  }

  .apps {
    display: flex;
    width: 538px;
    padding-left: 2px;
  }

  .apps button {
    flex: 1;
    margin: 0 3px;
    padding-top: 2px;
    border-bottom: 2px solid transparent;
  }

  .apps .running {
    border-bottom-color: #76b9ed;
  }

  .apps .front {
    background: #4a4c48;
  }

  .tray {
    display: flex;
    align-items: center;
    gap: 7px;
    margin-left: auto;
    padding-right: 4px;
    font-size: 10px;
  }

  .people {
    margin-right: 9px;
  }

  .tray time {
    line-height: 15px;
    text-align: center;
  }

  .notify {
    position: relative;
    width: 38px;
    color: #aaa;
  }

  .notify svg {
    margin-left: 6px;
  }

  .notify .mark {
    position: absolute;
    top: 0;
    left: -16px;
  }

  .notify span {
    position: absolute;
    top: 1px;
    left: 8px;
  }
</style>
